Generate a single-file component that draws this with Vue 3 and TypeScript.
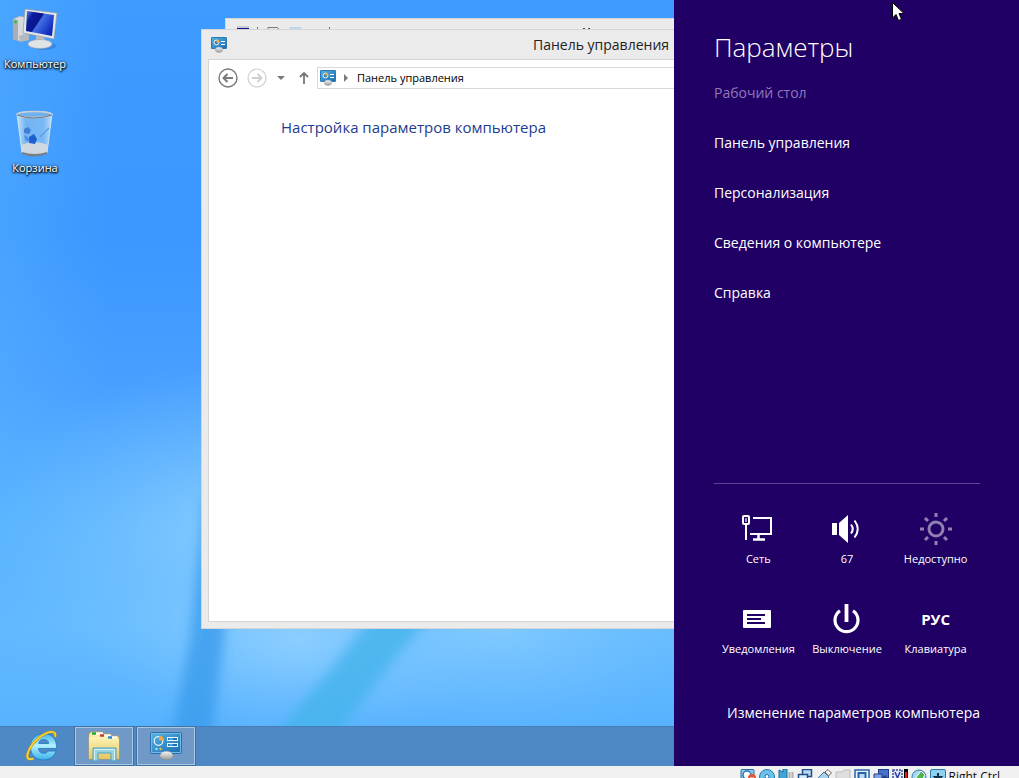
<script setup lang="ts">
interface Tile {
  id: string
  label: string
  dim?: boolean
}

const menu: string[] = ['Панель управления', 'Персонализация', 'Сведения о компьютере', 'Справка']

const tiles: Tile[] = [
  { id: 'network', label: 'Сеть' },
  { id: 'volume', label: '67' },
  { id: 'brightness', label: 'Недоступно', dim: true },
  { id: 'notifications', label: 'Уведомления' },
  { id: 'power', label: 'Выключение' },
  { id: 'keyboard', label: 'Клавиатура' },
]
</script>

<template>
  <div class="vm">
    <svg class="defs" width="0" height="0" aria-hidden="true">
      <defs>
        <linearGradient id="screenBlue" x1="0" y1="0" x2="1" y2="1">
          <stop offset="0" stop-color="#57b4e6" />
          <stop offset="1" stop-color="#1a6cae" />
        </linearGradient>
        <linearGradient id="knob" x1="0" y1="0" x2="0" y2="1">
          <stop offset="0" stop-color="#f7f7f7" />
          <stop offset="1" stop-color="#9a9a9a" />
        </linearGradient>
        <symbol id="panel" viewBox="0 0 32 28">
          <rect x="0.5" y="0.5" width="31" height="21" rx="1" fill="url(#screenBlue)" stroke="#2a6fa8" />
          <rect x="1.5" y="1.5" width="29" height="19" fill="none" stroke="#6dbbe6" />
          <circle cx="8.5" cy="9" r="4.3" fill="none" stroke="#e8f6ff" stroke-width="1.2" />
          <path d="M9 8.500V3.500a5 5 0 0 1 5 5z" fill="#f6a63c" />
          <circle cx="6.5" cy="17" r="1.200" fill="#9fe0ff" />
          <circle cx="10.5" cy="17" r="1.200" fill="#f6b64c" />
          <rect x="17.5" y="5.5" width="10" height="3" fill="#1a6fb5" stroke="#e8f6ff" />
          <rect x="17.5" y="11.5" width="10" height="3" fill="#1a6fb5" stroke="#e8f6ff" />
          <path d="M19 7h4M19 13h4" stroke="#7fd0ff" />
          <ellipse cx="16.5" cy="23.5" rx="6.5" ry="4.3" fill="url(#knob)" stroke="#8a8a8a" stroke-width="0.4" />
        </symbol>
        <symbol id="panelSmall" viewBox="0 0 16 16">
          <rect x="0.5" y="0.5" width="15" height="11" rx="0.5" fill="url(#screenBlue)" stroke="#2a78b4" />
          <circle cx="5.5" cy="5.5" r="2.4" fill="#3d86b4" stroke="#e8f6ff" />
          <path d="M5.5 5.500V2.500a3 3 0 0 1 3 3z" fill="#f6b050" />
          <path d="M10 4.500h4M10 7.500h4" stroke="#fff" />
          <ellipse cx="8" cy="12.800" rx="3.800" ry="2.700" fill="url(#knob)" stroke="#9a9a9a" stroke-width="0.4" />
        </symbol>
      </defs>
    </svg>

    <div class="guest">
      <svg class="wallpaper" viewBox="0 0 1019 766" preserveAspectRatio="none" aria-hidden="true">
        <defs>
          <linearGradient id="sky" x1="0" y1="0" x2="0" y2="1">
            <stop offset="0" stop-color="#3f9bff" />
            <stop offset="0.3" stop-color="#3b96ff" />
            <stop offset="0.5" stop-color="#489fff" />
            <stop offset="0.68" stop-color="#5ab4ff" />
            <stop offset="0.82" stop-color="#66bcff" />
            <stop offset="1" stop-color="#50adff" />
          </linearGradient>
          <linearGradient id="edge" x1="0" y1="0" x2="1" y2="0">
            <stop offset="0" stop-color="#5ab4ff" stop-opacity="0.4" />
            <stop offset="1" stop-color="#5ab4ff" stop-opacity="0" />
          </linearGradient>
          <radialGradient id="glow">
            <stop offset="0" stop-color="#97d4ff" stop-opacity="0.75" />
            <stop offset="0.5" stop-color="#8accff" stop-opacity="0.35" />
            <stop offset="1" stop-color="#79c6ff" stop-opacity="0" />
          </radialGradient>
          <filter id="soft" x="-50%" y="-20%" width="200%" height="140%">
            <feGaussianBlur stdDeviation="6" />
          </filter>
        </defs>
        <rect width="1019" height="766" fill="url(#sky)" />
        <rect width="110" height="766" fill="url(#edge)" />
        <ellipse cx="240" cy="530" rx="250" ry="170" fill="url(#glow)" />
        <ellipse cx="300" cy="640" rx="200" ry="110" fill="url(#glow)" />
        <ellipse cx="500" cy="630" rx="220" ry="120" fill="url(#glow)" opacity="0.7" />
        <path d="M204 500L230 480L224 640L208 766H166L190 640Z" fill="#3a9cec" opacity="0.8" filter="url(#soft)" />
        <path d="M385 600H445L398 655L312 766H248L330 670Z" fill="#45b4ec" opacity="0.8" filter="url(#soft)" />
      </svg>

      <main class="desktop">
        <ul class="shortcuts">
          <li>
            <button class="shortcut" type="button">
              <svg width="48" height="48" viewBox="0 0 48 48" aria-hidden="true">
                <defs>
                  <linearGradient id="scr" x1="0" y1="0" x2="1" y2="0.6">
                    <stop offset="0" stop-color="#5f86e8" />
                    <stop offset="0.25" stop-color="#0a1b9c" />
                    <stop offset="0.5" stop-color="#08158c" />
                    <stop offset="0.55" stop-color="#4470e6" />
                    <stop offset="1" stop-color="#0d2ab8" />
                  </linearGradient>
                </defs>
                <path d="M2 13l7-3 9 2v22l-10 1-6-2z" fill="#d7dadd" stroke="#979ca3" stroke-width="0.6" />
                <path d="M2 13l5 1v21l-5-2z" fill="#a9aeb5" />
                <circle cx="4.5" cy="16" r="1.4" fill="#27c22c" />
                <path d="M8 30l10-4v8l-9 2z" fill="#b6babf" />
                <ellipse cx="33" cy="40" rx="12" ry="4" fill="#2f6fc8" opacity="0.5" />
                <path d="M25 29l8 1 1 6h-9z" fill="#b9bdc2" />
                <ellipse cx="29" cy="38" rx="12" ry="4.5" fill="#e1e4e7" stroke="#9aa0a6" stroke-width="0.6" />
                <path d="M14 3l32 4-3 26-31-6z" fill="#e4e7ea" stroke="#9299a3" stroke-width="0.7" />
                <path d="M16 5l27 4-2 21-26-5z" fill="url(#scr)" />
              </svg>
              <span>Компьютер</span>
            </button>
          </li>
          <li>
            <button class="shortcut" type="button">
              <svg width="48" height="48" viewBox="0 0 48 48" aria-hidden="true">
                <defs>
                  <linearGradient id="glass" x1="0" y1="0" x2="1" y2="0">
                    <stop offset="0" stop-color="#c5e2f8" />
                    <stop offset="0.25" stop-color="#74b4f2" />
                    <stop offset="0.75" stop-color="#78b8f6" />
                    <stop offset="1" stop-color="#bcdcf6" />
                  </linearGradient>
                </defs>
                <path d="M6 4l5 39q13 5 25 0l5-39z" fill="url(#glass)" stroke="#d8ebf9" stroke-width="0.8" />
                <path d="M10 35q13-6 27 0l-1 8q-12 5-25 0z" fill="#d9dcde" opacity="0.9" />
                <path d="M11 42q13 4 25 0v2q-13 5-25 0z" fill="#77808a" />
                <path d="M13 19l4-2 3 3-2 4-5-1z" fill="#3f7fd8" />
                <path d="M18 27l5-3 3 5-2 5-6-1z" fill="#1f5fd0" />
                <path d="M13 25l4 2 2 5-5-2z" fill="#4f90e8" />
                <path d="M29 27l9-9" stroke="#5b9fe4" stroke-width="1.500" />
                <ellipse cx="23.5" cy="4.5" rx="17.5" ry="3" fill="#6fb0ee" stroke="#c9cfd4" stroke-width="1.600" />
                <path d="M6 5q17 6 35 0" stroke="#6d7680" fill="none" />
              </svg>
              <span>Корзина</span>
            </button>
          </li>
        </ul>

        <section class="window window-back" aria-hidden="true">
          <svg width="400" height="10" viewBox="0 0 400 10">
            <path d="M11 9h12v1H11z" fill="#101088" />
            <path d="M11 8h12" stroke="#aab" />
            <path d="M31.5 8v2M103.5 8v2" stroke="#777" />
            <path d="M42 10V8.500h9l2 1.500" stroke="#777" fill="none" />
            <path d="M64 8.500h11V10H64z" fill="#d3e6f3" stroke="#b7d3e8" />
            <path d="M357 9.500h2M362 9.500h2" stroke="#444" />
          </svg>
        </section>

        <section class="window window-front" aria-label="Панель управления">
          <header class="titlebar">
            <svg width="16" height="16" viewBox="0 0 16 16" aria-hidden="true"><use href="#panelSmall" width="16" height="16" /></svg>
            <h2>Панель управления</h2>
          </header>
          <div class="client">
            <div class="toolbar">
              <div class="navigation">
                <button class="tool round" type="button" aria-label="Назад">
                  <svg width="20" height="20" viewBox="0 0 20 20" fill="none" stroke="#7a7a7a">
                    <circle cx="10" cy="10" r="9" stroke-width="1.4" />
                    <path d="M15 10H6M9.500 6L5.500 10l4 4" stroke-width="2" />
                  </svg>
                </button>
                <button class="tool round" type="button" aria-label="Вперёд">
                  <svg width="20" height="20" viewBox="0 0 20 20" fill="none" stroke="#cfcfcf">
                    <circle cx="10" cy="10" r="9" stroke-width="1.2" />
                    <path d="M5 10h9M10.500 6l4 4-4 4" stroke-width="1.8" />
                  </svg>
                </button>
                <button class="tool narrow" type="button" aria-label="Последние расположения">
                  <svg width="8" height="4" viewBox="0 0 8 4"><path d="M0 0h8L4 4z" fill="#7a7a7a" /></svg>
                </button>
                <button class="tool up" type="button" aria-label="Вверх">
                  <svg width="10" height="14" viewBox="0 0 10 14" fill="none" stroke="#757575" stroke-width="1.8">
                    <path d="M5 13V2M1 6l4-4 4 4" />
                  </svg>
                </button>
              </div>
              <nav class="address" aria-label="Адрес">
                <svg width="16" height="16" viewBox="0 0 16 16" aria-hidden="true"><use href="#panelSmall" width="16" height="16" /></svg>
                <svg class="chevron" width="4" height="8" viewBox="0 0 4 8" aria-hidden="true"><path d="M0 0v8l4-4z" fill="#7a7a7a" /></svg>
                <a href="#">Панель управления</a>
              </nav>
            </div>
            <h1>Настройка параметров компьютера</h1>
          </div>
        </section>

        <nav class="taskbar" aria-label="Панель задач">
          <button class="task" type="button" aria-label="Internet Explorer">
            <svg width="32" height="32" viewBox="0 0 32 32">
              <defs>
                <linearGradient id="ie" x1="0" y1="0" x2="0" y2="1">
                  <stop offset="0" stop-color="#3fb0ea" />
                  <stop offset="0.45" stop-color="#b4f0ff" />
                  <stop offset="1" stop-color="#39b2ea" />
                </linearGradient>
              </defs>
              <path d="M30.500 18.500H12.500c.3 3.200 2.300 4.800 5.100 4.800 2.200 0 3.700-.8 4.600-2.300h7.800C28.300 26.500 24 30 17.500 30 9.800 30 4.500 25 4.500 17.200 4.500 9 10 3.500 17.500 3.500c8.500 0 13.500 5.500 13 15zM12.700 13.500h10c-.3-2.600-2-4-4.900-4-2.800 0-4.600 1.400-5.100 4z" fill="url(#ie)" stroke="#1b78c4" stroke-width="0.8" />
              <path d="M29.200 6C30 2.500 27 0.800 22 2.500 13 5.500 3 16 1.400 25c-.6 3.500 1.500 5 5.300 3.800" fill="none" stroke="#b98a12" stroke-width="2.600" stroke-linecap="round" />
              <path d="M29.200 6C30 2.500 27 0.800 22 2.500 13 5.500 3 16 1.400 25c-.6 3.500 1.500 5 5.300 3.800" fill="none" stroke="#fbd62d" stroke-width="1.800" stroke-linecap="round" />
            </svg>
          </button>
          <button class="task open" type="button" aria-label="Проводник">
            <svg width="32" height="32" viewBox="0 0 32 32">
              <defs>
                <linearGradient id="folder" x1="0" y1="0" x2="0" y2="1">
                  <stop offset="0" stop-color="#fdf3b5" />
                  <stop offset="1" stop-color="#e6c65e" />
                </linearGradient>
              </defs>
              <path d="M1 29V4l2-2h11l2 2h6l2 2h6l1 2v21z" fill="url(#folder)" stroke="#c9a545" stroke-width="0.8" />
              <path d="M4 3.500h11M12 5.500h11M20 7.500h9" stroke="#fff" stroke-width="2" />
              <path d="M4 3.500h4" stroke="#18a83a" stroke-width="2.500" />
              <path d="M12 5.500h4" stroke="#c83a2a" stroke-width="2.500" />
              <path d="M20 7.500h4" stroke="#2a86d0" stroke-width="2.500" />
              <path d="M1 29V7h17l3 2h10v20z" fill="url(#folder)" />
              <path d="M5 31V18h23v13h-5v-8H10v8z" fill="#8fd2ea" fill-opacity="0.9" stroke="#4aa3c8" />
              <path d="M6.500 30V19.500h20V30" fill="none" stroke="#d9f4fc" stroke-width="0.9" />
            </svg>
          </button>
          <button class="task open" type="button" aria-label="Панель управления">
            <svg width="32" height="28" viewBox="0 0 32 28"><use href="#panel" width="32" height="28" /></svg>
          </button>
        </nav>
      </main>

      <aside class="charm">
        <h2 class="charm-title">Параметры</h2>
        <p class="context">Рабочий стол</p>
        <ul class="menu">
          <li v-for="item in menu" :key="item"><a href="#">{{ item }}</a></li>
        </ul>
        <div class="quick">
          <button v-for="tile in tiles" :key="tile.id" class="tile" type="button">
            <span class="glyph" :class="{ dim: tile.dim }" aria-hidden="true">
              <svg v-if="tile.id === 'network'" width="32" height="32" viewBox="0 0 32 32" fill="none" stroke="#fff">
                <path d="M11 5h18v16H8" stroke-width="2" />
                <path d="M16.500 21v5M11 26.500h12" stroke-width="2.5" />
                <path d="M4 11v16" stroke-width="2" />
                <rect x="1" y="3" width="6" height="8" rx="1" stroke-width="2" />
                <path d="M4 5v4" stroke-width="1.200" />
              </svg>
              <svg v-else-if="tile.id === 'volume'" width="32" height="32" viewBox="0 0 32 32" fill="none" stroke="#fff" stroke-width="2">
                <path d="M1 10h5v12H1zM8 10L17 2v28l-9-8z" fill="#fff" stroke="none" />
                <path d="M20 11.500q3.500 4.500 0 9M23.500 7.500q6.500 8.500 0 17" />
              </svg>
              <svg v-else-if="tile.id === 'brightness'" width="32" height="32" viewBox="0 0 32 32" fill="none" stroke="#fff">
                <circle cx="16" cy="16" r="7" stroke-width="3" />
                <path d="M16 0v4M16 28v4M0 16h4M28 16h4M5 5l3 3M24 24l3 3M5 27l3-3M24 8l3-3" stroke-width="3" />
              </svg>
              <svg v-else-if="tile.id === 'notifications'" width="32" height="32" viewBox="0 0 32 32">
                <rect x="1" y="7" width="28" height="18" rx="1" fill="#fff" />
                <path d="M5 12h18M5 16h14M5 20h18" stroke="#200064" stroke-width="2" />
              </svg>
              <svg v-else-if="tile.id === 'power'" width="32" height="32" viewBox="0 0 32 32" fill="none" stroke="#fff" stroke-width="3.200">
                <path d="M15.500 1v18" stroke-width="3.800" />
                <path d="M9 7.700a11.500 11.500 0 1 0 13 0" />
              </svg>
              <b v-else>РУС</b>
            </span>
            <span class="tile-label">{{ tile.label }}</span>
          </button>
        </div>
        <a class="change" href="#">Изменение параметров компьютера</a>
      </aside>

      <svg class="cursor" width="13" height="20" viewBox="0 0 13 20" aria-hidden="true">
        <path d="M0.500 0.500v15.500l3.500-3.500 2.500 6 3-1.200-2.500-5.800h5z" fill="#fff" stroke="#000" />
      </svg>
    </div>

    <footer class="host">
      <svg width="16" height="16" viewBox="0 0 16 16" aria-hidden="true">
        <rect x="1" y="0.5" width="13" height="14" rx="1" fill="#8fc8e8" stroke="#2670a8" />
        <circle cx="7" cy="6" r="4" fill="#fff" stroke="#2d78b4" stroke-width="1.500" />
        <circle cx="12" cy="9" r="4" fill="#e2552e" />
        <path d="M10 9h4" stroke="#fff" />
      </svg>
      <svg width="16" height="16" viewBox="0 0 16 16" aria-hidden="true">
        <circle cx="8" cy="8" r="7.500" fill="#6cc2ea" stroke="#2379b0" />
        <circle cx="8" cy="7.500" r="2" fill="#fff" stroke="#1c6aa3" />
      </svg>
      <svg width="16" height="16" viewBox="0 0 16 16" aria-hidden="true">
        <path d="M1 1l4 2V0h4v12H1z" fill="#41a4d6" stroke="#1d6b9c" />
        <path d="M11.500 3v9M14.500 3v9" stroke="#b0b0b0" stroke-width="2" />
      </svg>
      <svg width="16" height="16" viewBox="0 0 16 16" aria-hidden="true">
        <rect x="5.500" y="0.5" width="9" height="7" fill="#b9d8f2" stroke="#1d4f88" stroke-width="1.500" />
        <rect x="1.500" y="5.500" width="9" height="7" fill="#dcebf8" stroke="#1d4f88" stroke-width="1.500" />
      </svg>
      <svg width="16" height="16" viewBox="0 0 16 16" aria-hidden="true">
        <path d="M2 9l6-6 5 5-6 6z" fill="#a6d3ee" stroke="#52738f" />
        <path d="M9 3l3-2.500 3.500 3.500-3 3z" fill="#f3f3f3" stroke="#666" />
      </svg>
      <svg width="16" height="16" viewBox="0 0 16 16" aria-hidden="true">
        <path d="M1 14V3h6l2-2h6v13z" fill="#dedede" stroke="#bdbdbd" />
      </svg>
      <svg width="16" height="16" viewBox="0 0 16 16" aria-hidden="true">
        <rect x="1" y="1" width="14" height="13" fill="#eaf4fc" stroke="#2864a5" stroke-width="1.500" />
        <rect x="4.500" y="4" width="7" height="6" fill="#bcdcf4" stroke="#2864a5" stroke-width="2" />
      </svg>
      <svg width="16" height="16" viewBox="0 0 16 16" aria-hidden="true">
        <rect x="5.500" y="0.5" width="10" height="8" fill="#4a70c8" stroke="#223f86" />
        <path d="M1 5h8v8H1z" fill="#7ea1e6" stroke="#223f86" />
        <path d="M9 8l4-2v6l-4-2z" fill="#223f86" />
      </svg>
      <svg width="16" height="16" viewBox="0 0 16 16" aria-hidden="true">
        <rect x="1" y="1" width="9" height="13" fill="#e3e9fb" stroke="#3b4b9d" stroke-width="1.500" stroke-dasharray="2 1" />
        <path d="M3 3l2.500 6L8 3" fill="none" stroke="#2c3f9c" stroke-width="1.500" />
        <path d="M12 0h4v16h-4z" fill="#000" />
        <path d="M13 3h2v13h-2z" fill="#f01414" />
      </svg>
      <svg width="16" height="16" viewBox="0 0 16 16" aria-hidden="true">
        <circle cx="8" cy="8" r="7" fill="#a5d8f4" stroke="#3579ad" />
        <path d="M4 10l6-8 4 4-5 8z" fill="#4fb548" stroke="#fff" />
      </svg>
      <svg width="16" height="16" viewBox="0 0 16 16" aria-hidden="true">
        <rect x="0.5" y="0.5" width="15" height="15" rx="1.500" fill="#8fd0f0" stroke="#2a78a8" />
        <path d="M8 4v4M5 8h6l-3 3z" fill="#12324d" stroke="#12324d" stroke-width="2" />
      </svg>
      <span class="host-key">Right Ctrl</span>
    </footer>
  </div>
</template>

<style>
html,
body {
  margin: 0;
  overflow: hidden;
}
</style>

<style scoped>
.vm {
  display: flex;
  flex-direction: column;
  height: 100vh;
  overflow: hidden;
  background: #f0f0f0;
  font-family: "Open Sans", "Noto Sans", "Liberation Sans", sans-serif;
  font-size: 11px;
}

.defs {
  position: absolute;
}

button {
  display: flex;
  align-items: center;
  justify-content: center;
  margin: 0;
  padding: 0;
  border: 0;
  background: none;
  color: inherit;
  font: inherit;
}

a {
  color: inherit;
  text-decoration: none;
}

h1,
h2,
p,
ul {
  margin: 0;
  padding: 0;
  font-weight: 400;
  list-style: none;
}

svg {
  display: block;
  flex: none;
}

.guest {
  position: relative;
  display: flex;
  flex: 1;
  min-height: 0;
  overflow: hidden;
}

.wallpaper {
  position: absolute;
  inset: 0;
  width: 100%;
  height: 100%;
}

.desktop {
  position: relative;
  display: flex;
  flex: 1;
  flex-direction: column;
  justify-content: space-between;
  min-width: 0;
  overflow: hidden;
}

.shortcuts {
  display: flex;
  flex-direction: column;
  gap: 37px;
  width: 70px;
  padding-top: 6px;
}

.shortcut {
  flex-direction: column;
  gap: 1px;
  width: 100%;
  color: #fff;
  line-height: 18px;
  white-space: nowrap;
  text-shadow: 0 1px 2px #000, 1px 1px 2px #000, 0 0 3px #123;
}

.window {
  position: absolute;
  box-sizing: border-box;
  width: 800px;
  height: 600px;
  border: 1px solid #d3d6d9;
  background: #ebebeb;
}

.window-back {
  top: 18px;
  left: 225px;
  height: 400px;
}

.window-front {
  top: 29px;
  left: 201px;
  display: flex;
  flex-direction: column;
  padding: 0 6px 6px;
}

.titlebar {
  display: flex;
  align-items: center;
  height: 29px;
  padding: 0 3px;
}

.titlebar h2 {
  flex: 1;
  padding-right: 16px;
  color: #222;
  font-size: 14px;
  line-height: 20px;
  text-align: center;
}

.client {
  flex: 1;
  border: 1px solid #d5d5d5;
  background: #fff;
}

.toolbar {
  display: flex;
  align-items: center;
  padding: 7px 0 0 9px;
}

.navigation {
  display: flex;
  align-items: center;
  gap: 9px;
}

.round {
  width: 20px;
  height: 20px;
}

.narrow {
  width: 10px;
  height: 20px;
}

.up {
  width: 18px;
  height: 20px;
}

.address {
  display: flex;
  flex: 1;
  align-items: center;
  box-sizing: border-box;
  height: 22px;
  margin-left: 4px;
  padding-left: 2px;
  border: 1px solid #d9d9d9;
  color: #000;
  line-height: 18px;
}

.chevron {
  margin: 0 9px 0 8px;
}

.client h1 {
  margin: 26px 0 0 72px;
  color: #1e3d8f;
  font-size: 15px;
  line-height: 24px;
}

.taskbar {
  display: flex;
  gap: 4px;
  box-sizing: border-box;
  height: 40px;
  padding-left: 13px;
  border-top: 1px solid #487cb4;
  background: rgba(78, 134, 192, 0.92);
}

.task {
  box-sizing: border-box;
  width: 58px;
  height: 38px;
}

.task.open {
  border: 1px solid #a9c6e2;
  outline: 1px solid #41719f;
  background: #7099c8;
}

.charm {
  position: relative;
  display: flex;
  flex-direction: column;
  box-sizing: border-box;
  width: 345px;
  padding: 27px 39px 41px 40px;
  background: #200064;
  color: #fff;
  font-size: 14px;
}

.charm-title {
  margin-bottom: 1px;
  font-size: 26px;
  font-weight: 300;
  line-height: 40px;
}

.context,
.menu li {
  line-height: 50px;
}

.context {
  color: #9078ba;
}

.quick {
  display: grid;
  grid-template-columns: repeat(3, 1fr);
  gap: 34px 0;
  margin-top: auto;
  padding-top: 29px;
  border-top: 1px solid #5c4690;
}

.tile {
  flex-direction: column;
  gap: 4px;
  font-size: 11px;
  line-height: 20px;
  white-space: nowrap;
}

.glyph {
  display: flex;
  align-items: center;
  justify-content: center;
  height: 32px;
}

.glyph b {
  font-size: 15px;
  font-weight: 700;
}

.dim {
  opacity: 0.5;
}

.change {
  align-self: flex-end;
  margin-top: 42px;
  line-height: 24px;
  white-space: nowrap;
}

.cursor {
  position: absolute;
  top: 2px;
  left: 892px;
}

.host {
  display: flex;
  justify-content: flex-end;
  gap: 3px;
  box-sizing: border-box;
  height: 12px;
  padding: 3px 19px 0 0;
  overflow: hidden;
  color: #111;
}

.host-key {
  font-size: 12px;
  line-height: 16px;
}
</style>
